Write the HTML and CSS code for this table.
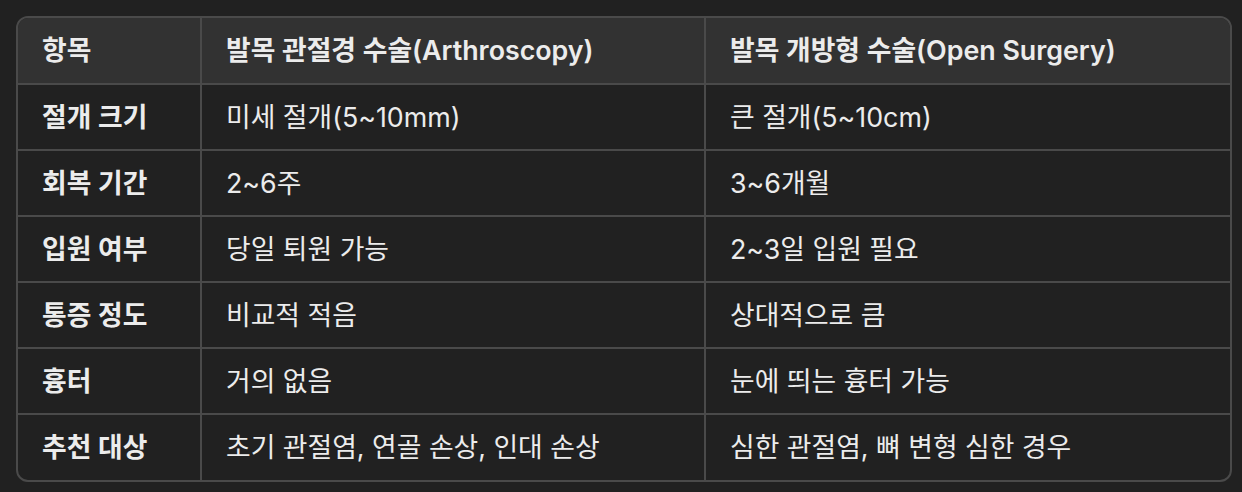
FILE: index.html
```html
<!DOCTYPE html>
<html lang="ko">
<head>
<meta charset="utf-8">
<link rel="stylesheet" href="styles.css">
</head>
<body>
<div class="table-wrap">
  <table class="cmp">
    <thead>
      <tr>
        <th class="c1">항목</th>
        <th class="c2">발목 관절경 수술(Arthroscopy)</th>
        <th class="c3">발목 개방형 수술(Open Surgery)</th>
      </tr>
    </thead>
    <tbody>
      <tr><td class="key">절개 크기</td><td>미세 절개(5~10mm)</td><td>큰 절개(5~10cm)</td></tr>
      <tr><td class="key">회복 기간</td><td>2~6주</td><td>3~6개월</td></tr>
      <tr><td class="key">입원 여부</td><td>당일 퇴원 가능</td><td>2~3일 입원 필요</td></tr>
      <tr><td class="key">통증 정도</td><td>비교적 적음</td><td>상대적으로 큼</td></tr>
      <tr><td class="key">흉터</td><td>거의 없음</td><td>눈에 띄는 흉터 가능</td></tr>
      <tr><td class="key">추천 대상</td><td>초기 관절염, 연골 손상, 인대 손상</td><td>심한 관절염, 뼈 변형 심한 경우</td></tr>
    </tbody>
  </table>
</div>
</body>
</html>
```
FILE: styles.css
```css
html, body {
  margin: 0;
  padding: 0;
  background: #212121;
}
body {
  padding: 16px 10px 12px 16px;
  font-family: Inter, "Noto Sans CJK KR", sans-serif;
  color: #ececec;
}
.table-wrap {
  border: 2px solid #4a4a4a;
  border-radius: 12px;
  overflow: hidden;
  width: 1212px;
}
.cmp {
  width: 100%;
  border-collapse: collapse;
  table-layout: fixed;
  font-size: 26.8px;
  line-height: 1.2;
}
.cmp th, .cmp td {
  height: 66px;
  padding: 0 24px;
  text-align: left;
  vertical-align: middle;
  border: 2px solid #4a4a4a;
  box-sizing: border-box;
  white-space: nowrap;
}
.cmp tr > :first-child { border-left: none; }
.cmp tr > :last-child { border-right: none; }
.cmp thead th { border-top: none; }
.cmp tbody tr:last-child td { border-bottom: none; }
.cmp thead th {
  background: #323232;
  font-weight: 600;
}
.cmp tbody td { font-weight: 400; }
.cmp td.key { font-weight: 600; }
.c1 { width: 183px; }
.c2 { width: 504px; }
```
